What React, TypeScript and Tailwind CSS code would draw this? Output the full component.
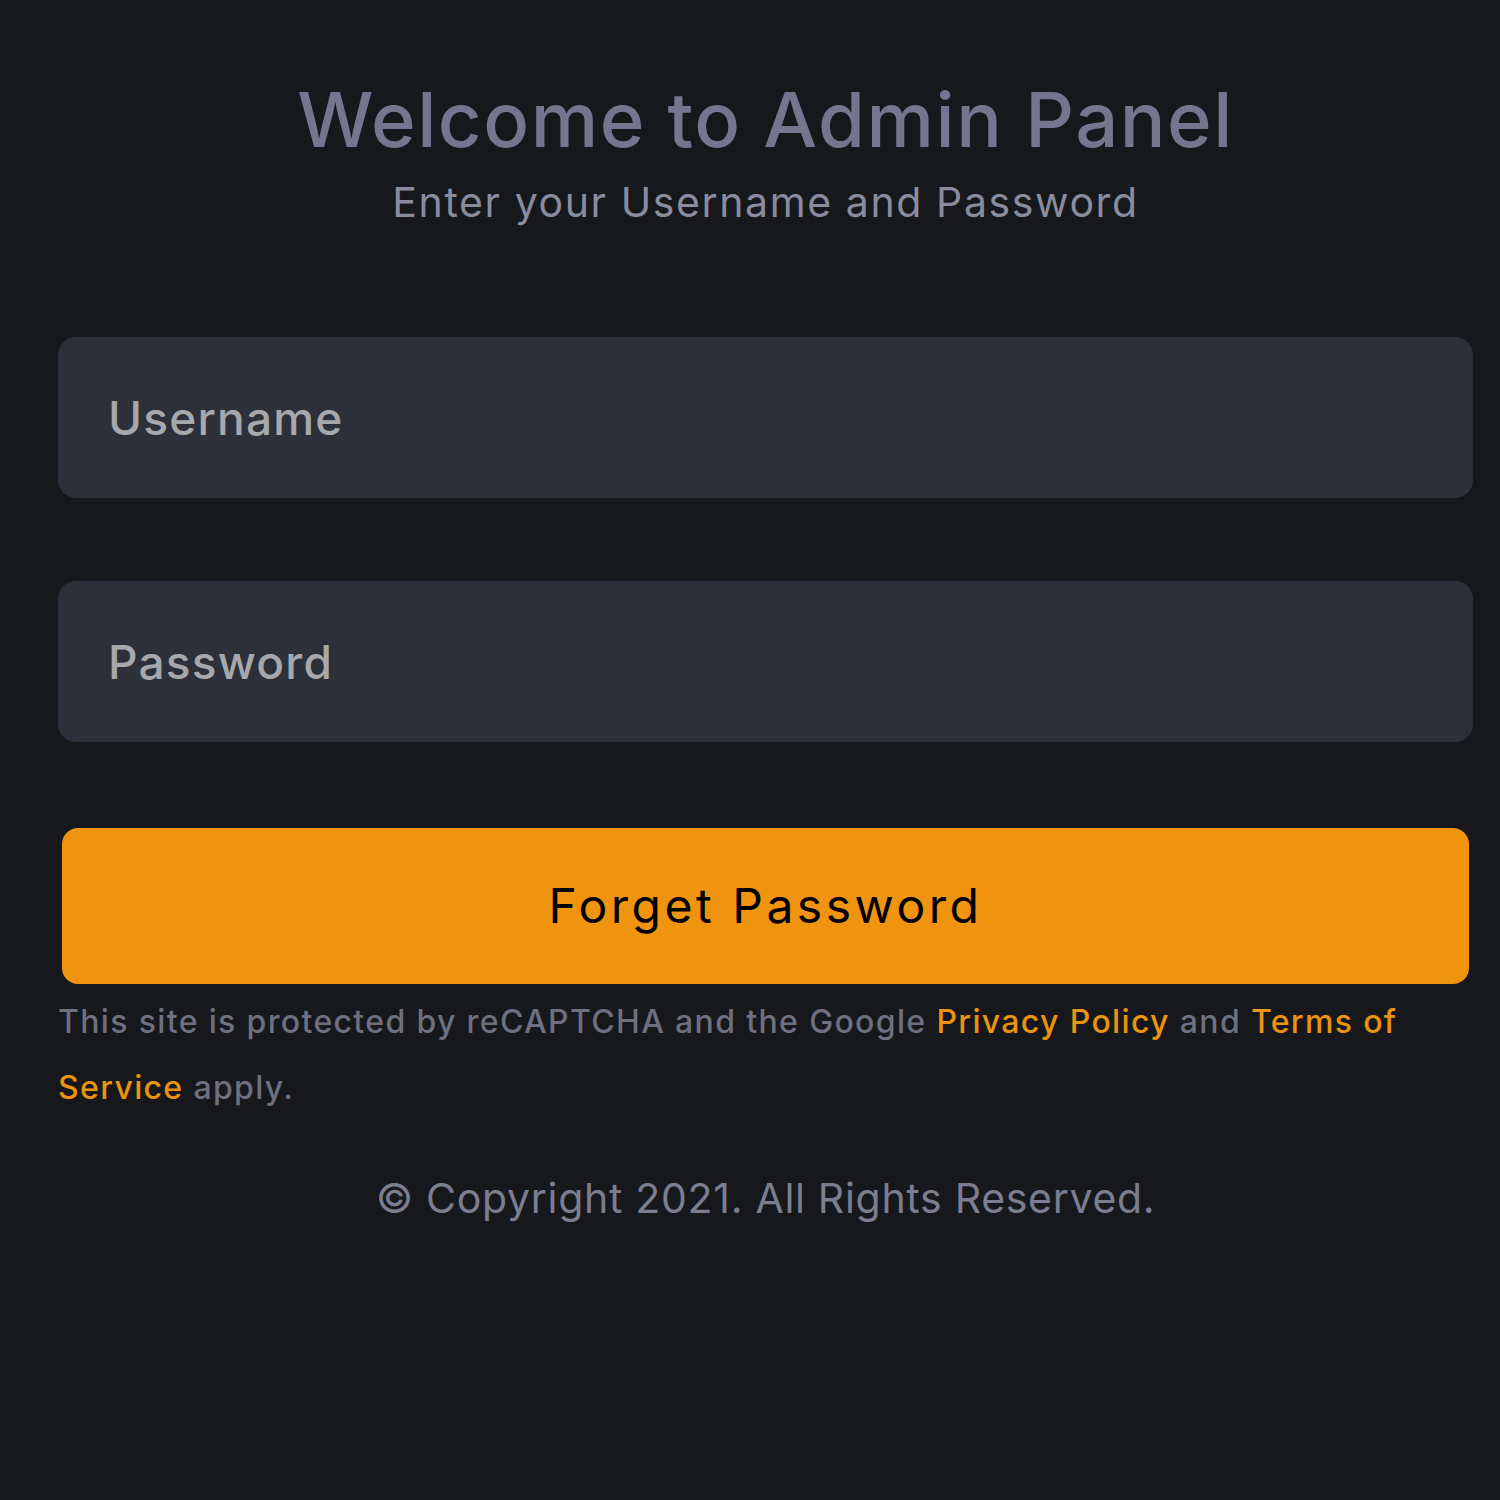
import React from "react";

const font = { fontFamily: "Inter, 'Noto Sans', sans-serif" };

function Field({ placeholder, type }: { placeholder: string; type: string }) {
  return (
    <input
      type={type}
      placeholder={placeholder}
      className="h-[161px] w-full rounded-[18px] bg-[#2e3039] pl-[50px] text-[46px] font-medium tracking-[1.2px] text-[#c9cbcd] outline-none placeholder:text-[#a6a8ab]"
    />
  );
}

export default function App() {
  return (
    <div className="min-h-[1500px] bg-[#16181c]" style={font}>
      <div className="ml-[58px] flex w-[1415px] flex-col pt-[81px]">
        <h1 className="text-center text-[76px] leading-[76px] font-medium tracking-[1.5px] text-[#74768f]">
          Welcome to Admin Panel
        </h1>
        <p className="mt-[25px] text-center text-[41px] leading-[41px] tracking-[1.6px] text-[#8a8c9e]">
          Enter your Username and Password
        </p>

        <form className="mt-[114px] flex flex-col" onSubmit={(e) => e.preventDefault()}>
          <Field type="text" placeholder="Username" />
          <div className="mt-[83px]">
            <Field type="password" placeholder="Password" />
          </div>
          <button
            type="submit"
            className="mx-[4px] mt-[86px] h-[156px] rounded-[16px] bg-[#f0930f] text-[48px] tracking-[3.5px] text-black"
          >
            Forget Password
          </button>
        </form>

        <p className="mt-[5px] text-[32px] leading-[66px] font-medium tracking-[1.35px] text-[#6e7080]">
          This site is protected by reCAPTCHA and the Google{" "}
          <a href="#" className="text-[#e9930f]">
            Privacy Policy
          </a>{" "}
          and{" "}
          <a href="#" className="text-[#e9930f]">
            Terms of Service
          </a>{" "}
          apply.
        </p>

        <p className="mt-[57px] text-center text-[41px] leading-[41px] tracking-[0.7px] text-[#7c7e90]">
          © Copyright 2021. All Rights Reserved.
        </p>
      </div>
    </div>
  );
}
